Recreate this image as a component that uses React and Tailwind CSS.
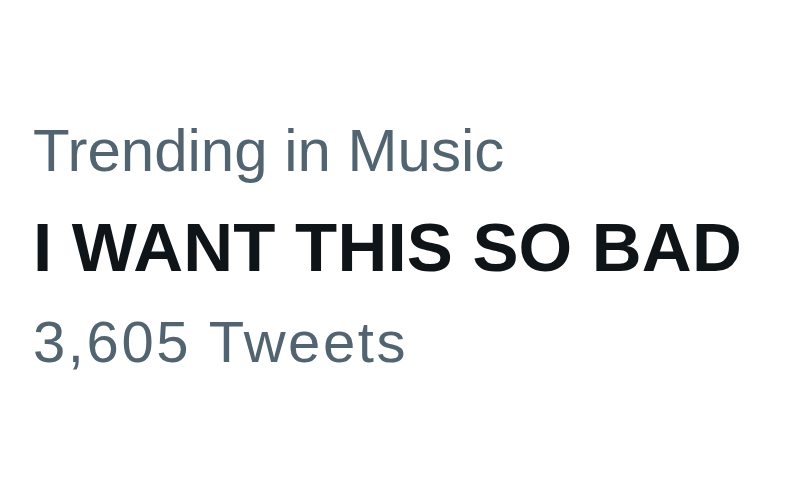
export default function App() {
  return (
    <div className="w-[799px] h-[504px] bg-white pl-[33px] pt-[121px] font-['Liberation_Sans',Arial,sans-serif] overflow-hidden">
      <div className="text-[60px] leading-[60px] text-[#536471] whitespace-nowrap">Trending in Music</div>
      <div className="mt-[32px] text-[69px] leading-[69px] font-bold tracking-[0.2px] text-[#0f1419] whitespace-nowrap">I WANT THIS SO BAD</div>
      <div className="mt-[31px] text-[58px] leading-[58px] tracking-[2.6px] text-[#536471] whitespace-nowrap">3,605 Tweets</div>
    </div>
  );
}
